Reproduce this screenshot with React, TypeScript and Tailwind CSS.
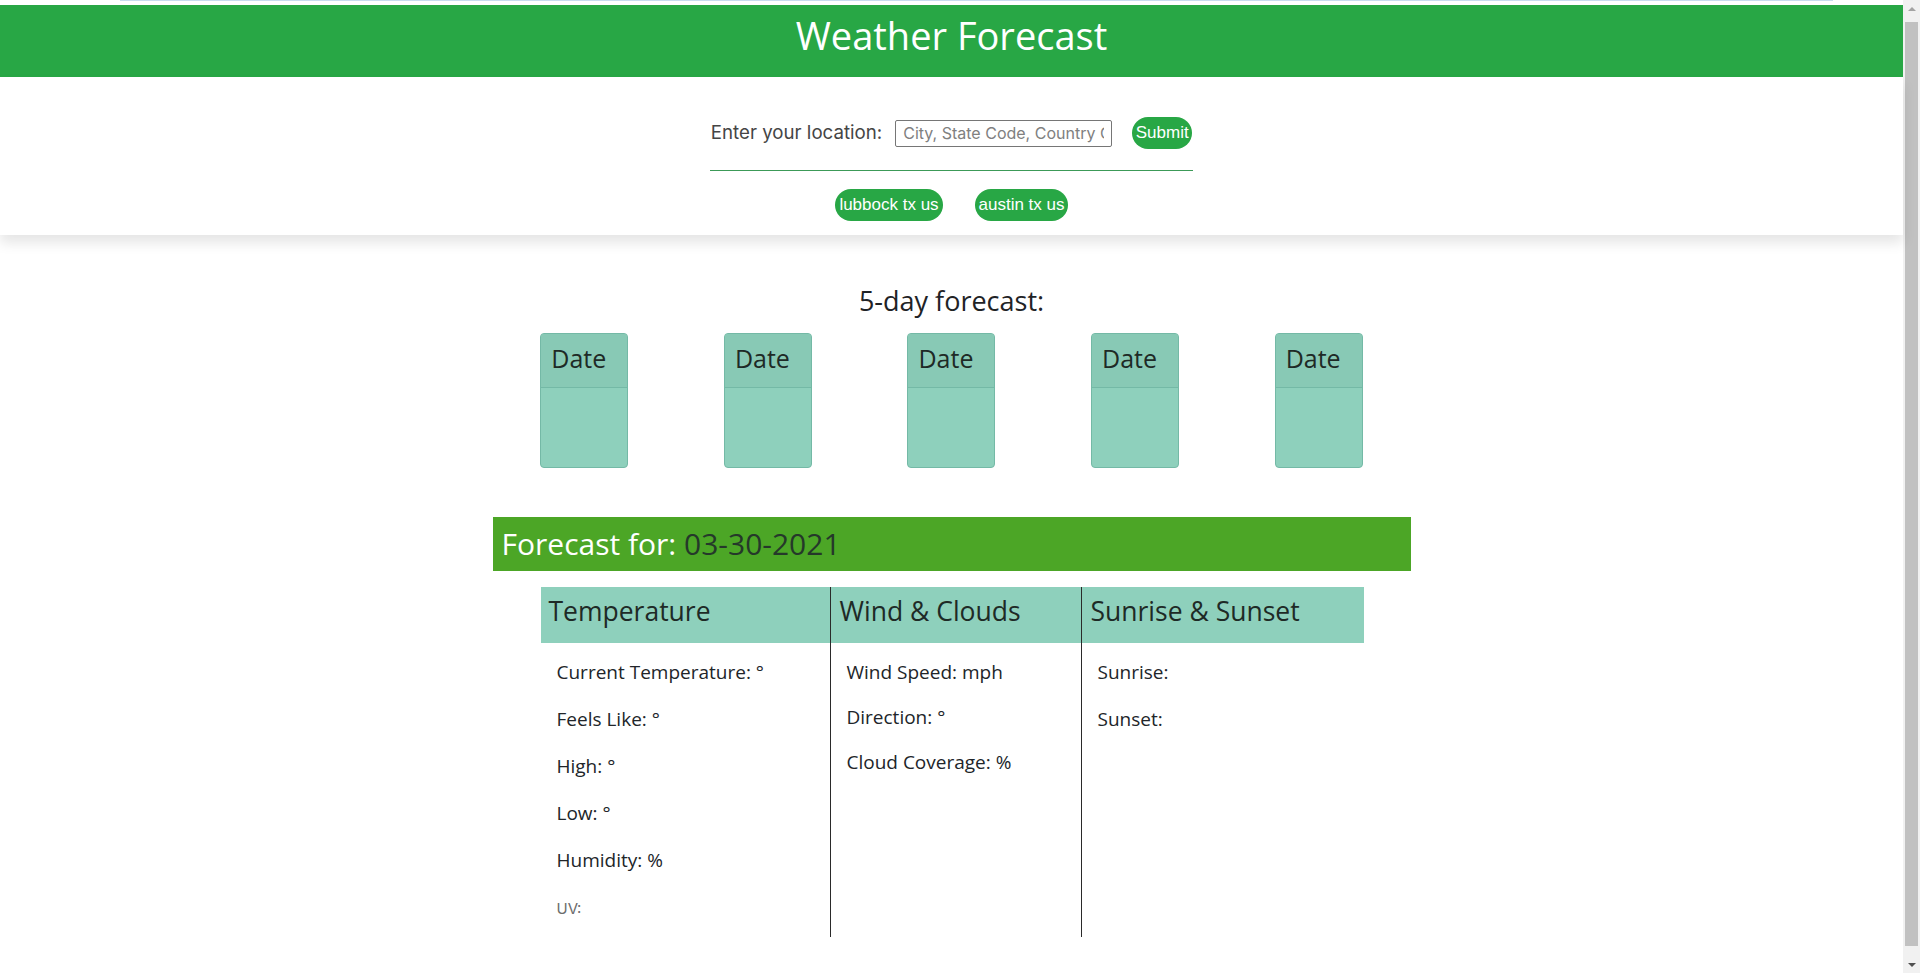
import React from "react";

const fira = { fontFamily: '"Open Sans", "Noto Sans", sans-serif' };

function DateCard() {
  return (
    <div className="flex h-[135px] w-[88px] flex-col overflow-hidden rounded-[4px] border border-[#74b9a6] bg-[#8ed0bc]">
      <div className="flex h-[54px] items-center border-b border-[#74b9a6] bg-[#88c9b5] pb-[4px] pl-[10px] text-[25px] text-[#1e2a26]" style={fira}>
        Date
      </div>
      <div className="flex-1" />
    </div>
  );
}

export default function App() {
  const temp = ["Current Temperature: °", "Feels Like: °", "High: °", "Low: °", "Humidity: %"];
  const wind = ["Wind Speed: mph", "Direction: °", "Cloud Coverage: %"];
  const sun = ["Sunrise:", "Sunset:"];
  return (
    <div className="flex h-[973px] w-[1920px] overflow-hidden bg-white">
      <div className="flex min-w-0 flex-1 flex-col">
        <div className="h-[5px] bg-white">
          <div className="ml-[120px] h-px w-[1713px] bg-[#c9dbef]" />
        </div>
        <header className="flex h-[72px] justify-center bg-[#28a745] pt-[6px]">
          <h1 className="text-[38px] leading-[48px] text-white" style={fira}>
            Weather Forecast
          </h1>
        </header>
        <section className="relative z-10 flex h-[158px] flex-col items-center bg-white shadow-[0_8px_12px_rgba(0,0,0,0.10)]">
          <div className="mt-[40px] flex h-[32px] w-[483px] items-center justify-center">
            <label className="shrink-0 whitespace-nowrap text-[18.7px] leading-[24px] text-[#454545]" style={{ fontFamily: "Inter, sans-serif" }}>
              Enter your location:
            </label>
            <input
              className="ml-[13px] h-[27px] w-[217px] shrink-0 rounded-[2px] border border-[#767676] px-[7px] text-[16px] placeholder:text-[#808080] outline-none"
              style={{ fontFamily: "Inter, sans-serif" }}
              placeholder="City, State Code, Country Code"
            />
            <button
              className="ml-[20px] h-[32px] w-[60px] shrink-0 rounded-full bg-[#28a745] text-[17px] text-white"
              style={{ fontFamily: '"Liberation Sans", Arial, sans-serif' }}
            >
              Submit
            </button>
          </div>
          <div className="mt-[21px] h-px w-[483px] shrink-0 bg-[#3c9a58]" />
          <div className="mt-[18px] flex gap-[32px]">
            <button
              className="h-[32px] w-[108px] rounded-full bg-[#28a745] text-[17px] text-white"
              style={{ fontFamily: '"Liberation Sans", Arial, sans-serif' }}
            >
              lubbock tx us
            </button>
            <button
              className="h-[32px] w-[93px] rounded-full bg-[#28a745] text-[17px] text-white"
              style={{ fontFamily: '"Liberation Sans", Arial, sans-serif' }}
            >
              austin tx us
            </button>
          </div>
        </section>
        <main className="mx-auto flex w-[918px] flex-col">
          <h2 className="mt-[49px] text-center text-[27px] leading-[34px] text-[#1f2326]" style={fira}>
            5-day forecast:
          </h2>
          <div className="mt-[15px] flex justify-around">
            <DateCard />
            <DateCard />
            <DateCard />
            <DateCard />
            <DateCard />
          </div>
          <div className="mt-[49px] flex h-[54px] items-center bg-[#4ca626] pl-[9px] pb-[2px] text-[30px]" style={fira}>
            <span className="text-white">Forecast for:&nbsp;</span>
            <span className="text-[#25382a]">03-30-2021</span>
          </div>
          <div className="mx-[48px] mt-[16px] grid grid-cols-[289px_251px_283px]">
            <div className="flex h-[56px] items-center bg-[#8ed0bc] pb-[6px] pl-[8px] text-[26.5px] text-[#1e2a26]" style={fira}>
              Temperature
            </div>
            <div className="flex h-[56px] items-center border-l border-[#2a2a2a] bg-[#8ed0bc] pb-[6px] pl-[9px] text-[26.5px] text-[#1e2a26]" style={fira}>
              Wind &amp; Clouds
            </div>
            <div className="flex h-[56px] items-center border-l border-[#2a2a2a] bg-[#8ed0bc] pb-[6px] pl-[9px] text-[26.5px] text-[#1e2a26]" style={fira}>
              Sunrise &amp; Sunset
            </div>
            <div className="flex h-[294px] flex-col gap-[23px] pl-[16px] pt-[17px]">
              {temp.map((t) => (
                <p key={t} className="text-[19px] leading-[24px] text-[#212529]" style={fira}>
                  {t}
                </p>
              ))}
              <p className="mt-[2px] text-[15px] leading-[24px] text-[#6c6c6c]" style={{ fontFamily: "Inter, sans-serif" }}>
                UV:
              </p>
            </div>
            <div className="flex h-[294px] flex-col gap-[21px] border-l border-[#2a2a2a] pl-[16px] pt-[17px]">
              {wind.map((t) => (
                <p key={t} className="text-[19px] leading-[24px] text-[#212529]" style={fira}>
                  {t}
                </p>
              ))}
            </div>
            <div className="flex h-[294px] flex-col gap-[23px] border-l border-[#2a2a2a] pl-[16px] pt-[17px]">
              {sun.map((t) => (
                <p key={t} className="text-[19px] leading-[24px] text-[#212529]" style={fira}>
                  {t}
                </p>
              ))}
            </div>
          </div>
        </main>
      </div>
      <div className="flex w-[17px] flex-col bg-[#f1f1f1]">
        <div className="flex h-[17px] items-center justify-center">
          <div className="h-0 w-0 border-x-[4px] border-b-[4px] border-x-transparent border-b-[#a3a3a3]" />
        </div>
        <div className="mx-[2px] mb-[10px] mt-[5px] flex-1 bg-[#c1c1c1]" />
        <div className="flex h-[17px] items-center justify-center">
          <div className="h-0 w-0 border-x-[4px] border-t-[4px] border-x-transparent border-t-[#505050]" />
        </div>
      </div>
    </div>
  );
}
